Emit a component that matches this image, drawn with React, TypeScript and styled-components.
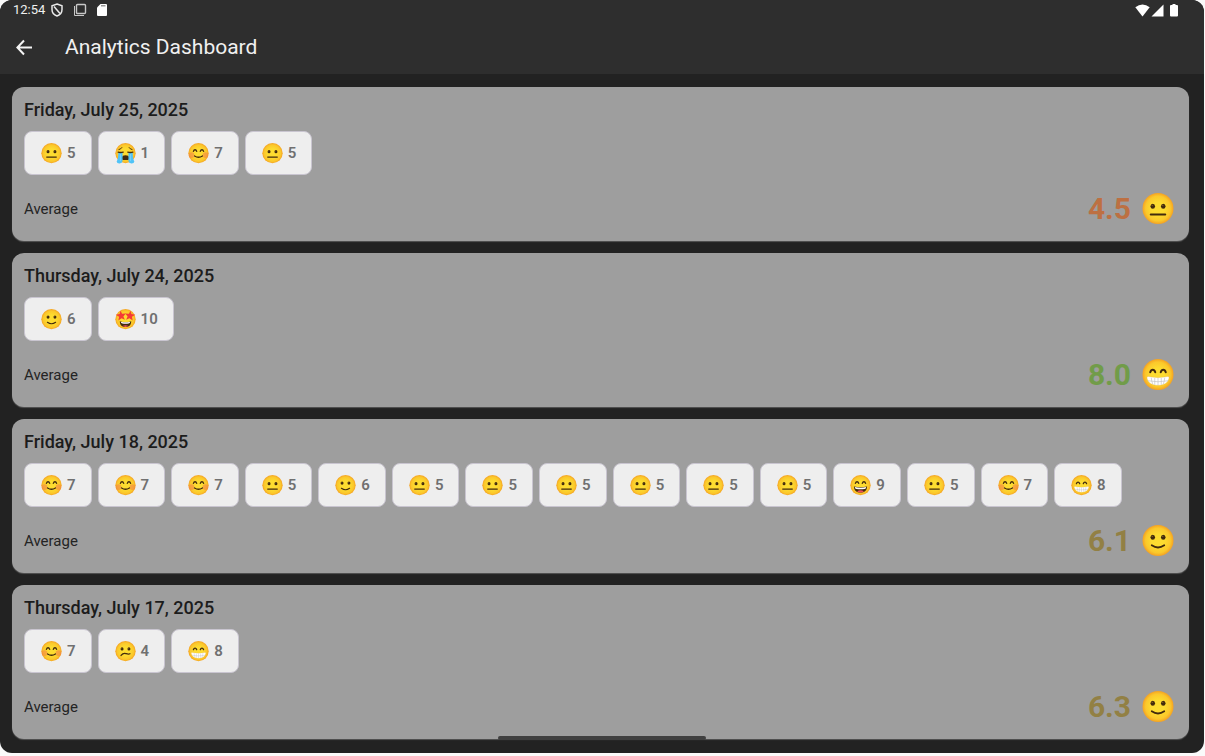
import React from "react";
import styled, { createGlobalStyle } from "styled-components";

const GlobalStyle = createGlobalStyle`
  * { box-sizing: border-box; }
  body {
    margin: 0;
    background: #fafafa;
    font-family: Roboto, "Liberation Sans", sans-serif;
  }
`;

const Screen = styled.div`
  position: relative;
  display: flex;
  flex-direction: column;
  min-height: calc(100vh - 3px);
  margin-right: 1px;
  background: #222222;
  border-radius: 12px;
  overflow: hidden;
`;

const Header = styled.header`
  background: #2e2e2e;
  color: #f0f0f0;
`;

const StatusBar = styled.div`
  display: flex;
  align-items: center;
  justify-content: space-between;
  height: 20px;
  padding: 0 25px 0 13px;
  font-size: 13px;
  line-height: 20px;
`;

const StatusGroup = styled.div<{ $gap: number }>`
  display: flex;
  align-items: center;
  gap: ${(p) => p.$gap}px;
  svg { display: block; }
`;

const Clock = styled.span`
  margin-right: -4px;
`;

const AppBar = styled.div`
  display: flex;
  align-items: center;
  gap: 29px;
  height: 54px;
  padding: 0 12px;
`;

const BackButton = styled.button`
  display: flex;
  padding: 0;
  border: 0;
  background: none;
  color: #f4f4f4;
  cursor: pointer;
`;

const PageTitle = styled.h1`
  margin: 0;
  font-size: 21px;
  line-height: 28px;
  font-weight: 400;
`;

const DayList = styled.main`
  display: flex;
  flex-direction: column;
  gap: 12px;
  padding: 13px 15px 13px 12px;
`;

const DayCard = styled.section`
  padding: 12px 12px 11px;
  border-radius: 12px;
  background: #9e9e9e;
  box-shadow: 0 1px 1px #555555;
`;

const DayTitle = styled.h2`
  margin: 0 0 10px;
  font-size: 18px;
  line-height: 22px;
  font-weight: 500;
  color: #1c1c1c;
`;

const ChipRow = styled.div`
  display: flex;
  flex-wrap: wrap;
  gap: 6px;
`;

const Chip = styled.div`
  display: flex;
  align-items: center;
  gap: 5px;
  height: 44px;
  padding: 0 15px 0 16px;
  border: 1px solid #c9c5d0;
  border-radius: 8px;
  background: #eeeeee;
  color: #707070;
  font-size: 15px;
  line-height: 20px;
  font-weight: 600;
`;

const AverageRow = styled.div`
  display: flex;
  align-items: center;
  justify-content: space-between;
  height: 42px;
  margin-top: 13px;
`;

const AverageLabel = styled.span`
  font-size: 15px;
  line-height: 20px;
  color: #242424;
`;

const AverageScore = styled.div<{ $color: string }>`
  display: flex;
  align-items: center;
  gap: 11px;
  padding-right: 3px;
  color: ${(p) => p.$color};
  font-size: 30px;
  line-height: 40px;
  font-weight: 700;
`;

const HomeIndicator = styled.div`
  position: absolute;
  left: 50%;
  bottom: 13px;
  width: 208px;
  height: 4px;
  transform: translateX(-50%);
  border-radius: 2px;
  background: #404040;
`;

const EmojiSvg = styled.svg`
  display: block;
  flex: none;
`;

type Mood = "neutral" | "sob" | "blush" | "smile" | "star" | "grin" | "laugh" | "confused";

const INK = "#422b0d";

const DotEyes = ({ y }: { y: number }) => (
  <>
    <ellipse cx="43" cy={y} rx="9" ry="10" fill={INK} />
    <ellipse cx="85" cy={y} rx="9" ry="10" fill={INK} />
    <ellipse cx="41" cy={y - 4} rx="3" ry="2.5" fill="#896024" />
    <ellipse cx="83" cy={y - 4} rx="3" ry="2.5" fill="#896024" />
  </>
);

const ArcEyes = ({ y }: { y: number }) => (
  <path
    d={`M33 ${y + 5} Q36 ${y - 5} 43 ${y - 5} Q50 ${y - 5} 53 ${y + 5} M75 ${y + 5} Q78 ${y - 5} 85 ${y - 5} Q92 ${y - 5} 95 ${y + 5}`}
    fill="none"
    stroke={INK}
    strokeWidth="8"
    strokeLinecap="round"
  />
);

const features: Record<Mood, React.ReactNode> = {
  neutral: (
    <>
      <DotEyes y={53} />
      <path d="M35 86H93" stroke={INK} strokeWidth="8" strokeLinecap="round" />
    </>
  ),
  smile: (
    <>
      <DotEyes y={49} />
      <path d="M39 81Q64 99 89 81" fill="none" stroke={INK} strokeWidth="7" strokeLinecap="round" />
    </>
  ),
  confused: (
    <>
      <DotEyes y={48} />
      <path d="M37 88C46 77 57 74 66 77S82 83 91 78" fill="none" stroke={INK} strokeWidth="8" strokeLinecap="round" />
    </>
  ),
  blush: (
    <>
      <circle cx="22" cy="74" r="17" fill="#f27a4b" opacity=".5" />
      <circle cx="106" cy="74" r="17" fill="#f27a4b" opacity=".5" />
      <ArcEyes y={46} />
      <path d="M40 79Q64 95 88 79" fill="none" stroke={INK} strokeWidth="8" strokeLinecap="round" />
    </>
  ),
  grin: (
    <>
      <ArcEyes y={48} />
      <path d="M24 70Q64 79 104 70Q109 70 108 76C104 95 88 105 64 105S24 95 20 76Q19 70 24 70Z" fill="#ffffff" stroke="#e0b050" strokeWidth="1" />
      <path d="M23 87Q64 95 105 87M37 74Q38 89 43 100M51 76V103M64 76V105M77 76V103M91 74Q90 89 85 100" fill="none" stroke="#bdbdbd" strokeWidth="2.5" />
    </>
  ),
  laugh: (
    <>
      <ArcEyes y={46} />
      <path d="M24 70Q64 79 104 70C104 94 88 107 64 107S24 94 24 70Z" fill={INK} />
      <path d="M29 73Q64 81 99 73Q98 84 89 85Q64 89 39 85Q30 84 29 73Z" fill="#ffffff" />
      <path d="M43 100Q64 87 85 100Q76 106 64 106T43 100Z" fill="#ed4d5a" />
    </>
  ),
  star: (
    <>
      <path d="M29 74Q64 85 99 74C98 99 84 110 64 110S30 99 29 74Z" fill={INK} />
      <path d="M35 77Q64 85 93 77Q91 87 83 88Q64 91 45 88Q37 87 35 77Z" fill="#ffffff" />
      <path d="M46 104Q64 95 82 104Q74 109 64 109T46 104Z" fill="#ed4d5a" />
      <path d="M34 11L43 29L66 28L51 45L60 66L40 56L20 70L25 47L5 35L28 31Z" fill="#f43b37" />
      <path d="M94 11L100 31L123 35L103 47L108 70L88 56L68 66L77 45L62 28L85 29Z" fill="#f43b37" />
    </>
  ),
  sob: (
    <>
      <path d="M24 40Q36 38 42 28M104 40Q92 38 86 28" fill="none" stroke={INK} strokeWidth="6" strokeLinecap="round" />
      <path d="M42 88Q44 74 64 74T86 88V100Q78 104 64 104T42 100Z" fill={INK} />
      <path d="M20 58H46V110Q44 125 28 125Q12 126 10 112Q20 100 20 58Z" fill="#4fc3f7" />
      <path d="M108 58H82V110Q84 125 100 125Q116 126 118 112Q108 100 108 58Z" fill="#4fc3f7" />
      <path d="M33 66V108M95 66V108" stroke="#81d4fa" strokeWidth="5" strokeLinecap="round" />
      <path d="M19 56Q34 60 50 56M109 56Q94 60 78 56" fill="none" stroke={INK} strokeWidth="8" strokeLinecap="round" />
    </>
  ),
};

const Emoji = ({ mood, size }: { mood: Mood; size: number }) => (
  <EmojiSvg width={size} height={size} viewBox="0 0 128 128" role="img" aria-label={mood}>
    <circle cx="64" cy="62" r="62" fill="url(#face)" />
    {features[mood]}
  </EmojiSvg>
);

const moodForScore: Record<number, Mood> = {
  1: "sob",
  4: "confused",
  5: "neutral",
  6: "smile",
  7: "blush",
  8: "grin",
  9: "laugh",
  10: "star",
};

const days: { date: string; scores: number[]; average: string; mood: Mood; color: string }[] = [
  { date: "Friday, July 25, 2025", scores: [5, 1, 7, 5], average: "4.5", mood: "neutral", color: "#bd7042" },
  { date: "Thursday, July 24, 2025", scores: [6, 10], average: "8.0", mood: "grin", color: "#719c49" },
  {
    date: "Friday, July 18, 2025",
    scores: [7, 7, 7, 5, 6, 5, 5, 5, 5, 5, 5, 9, 5, 7, 8],
    average: "6.1",
    mood: "smile",
    color: "#928044",
  },
  { date: "Thursday, July 17, 2025", scores: [7, 4, 8], average: "6.3", mood: "smile", color: "#928044" },
];

export default function App() {
  return (
    <>
      <GlobalStyle />
      <Screen>
        <Header>
          <StatusBar>
            <StatusGroup $gap={10}>
              <Clock>12:54</Clock>
              <svg width="12" height="14" viewBox="0 0 12 14" fill="none" stroke="#e8e8e8" strokeWidth="1.5">
                <path d="M6 1L11 2.7V6.5C11 9.5 9 12 6 13C3 12 1 9.5 1 6.5V2.7Z" />
                <path d="M3 3.5L9 10.5" />
              </svg>
              <svg width="14" height="14" viewBox="0 0 14 14" fill="none" stroke="#c8c8c8">
                <rect x="3.5" y="1.5" width="9" height="9" rx="1" strokeWidth="1.4" />
                <path d="M1.5 3V12.5H11" />
              </svg>
              <svg width="10" height="14" viewBox="0 0 10 14">
                <path d="M3.5 1H9Q10 1 10 2V12Q10 13 9 13H1Q0 13 0 12V4.5Z" fill="#ffffff" />
                <path d="M4 2.8H8.5" stroke="#999999" strokeWidth="1.4" />
              </svg>
            </StatusGroup>
            <StatusGroup $gap={1}>
              <svg width="15" height="13" viewBox="0 0 15 13">
                <path d="M0.3 3.3Q7.5 -2.3 14.7 3.3L7.5 12.5Z" fill="#ffffff" />
              </svg>
              <svg width="13" height="13" viewBox="0 0 13 13">
                <path d="M12.5 0.5V12.5H0.5Z" fill="#ffffff" />
              </svg>
              <svg width="14" height="13" viewBox="0 0 14 13">
                <path d="M7.5 0H10.5V1H12Q13 1 13 2V11.5Q13 12.5 12 12.5H6Q5 12.5 5 11.5V2Q5 1 6 1H7.5Z" fill="#ffffff" />
              </svg>
            </StatusGroup>
          </StatusBar>
          <AppBar>
            <BackButton type="button" aria-label="Back">
              <svg width="24" height="24" viewBox="0 0 24 24" fill="none" stroke="currentColor" strokeWidth="2">
                <path d="M20 12.5H6M12 5.5L5.4 12.5L12 19.5" />
              </svg>
            </BackButton>
            <PageTitle>Analytics Dashboard</PageTitle>
          </AppBar>
        </Header>
        <DayList>
          {days.map((day) => (
            <DayCard key={day.date}>
              <DayTitle>{day.date}</DayTitle>
              <ChipRow>
                {day.scores.map((score, i) => (
                  <Chip key={i}>
                    <Emoji mood={moodForScore[score]} size={21} />
                    <span>{score}</span>
                  </Chip>
                ))}
              </ChipRow>
              <AverageRow>
                <AverageLabel>Average</AverageLabel>
                <AverageScore $color={day.color}>
                  <span>{day.average}</span>
                  <Emoji mood={day.mood} size={32} />
                </AverageScore>
              </AverageRow>
            </DayCard>
          ))}
        </DayList>
        <HomeIndicator />
        <svg width="0" height="0" aria-hidden="true">
          <defs>
            <radialGradient id="face">
              <stop offset="0.4" stopColor="#fddc30" />
              <stop offset="0.8" stopColor="#fbc82b" />
              <stop offset="1" stopColor="#f4a223" />
            </radialGradient>
          </defs>
        </svg>
      </Screen>
    </>
  );
}
